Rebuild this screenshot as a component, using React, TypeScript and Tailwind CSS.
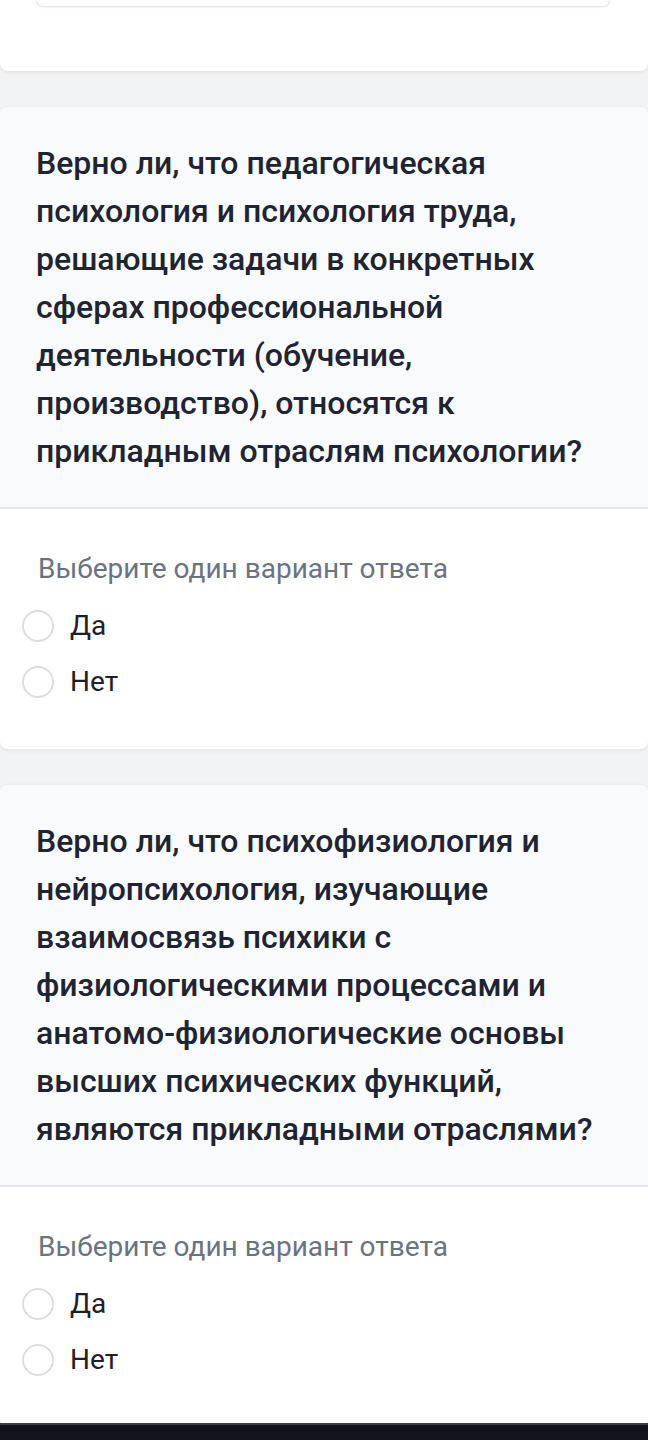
import React from "react";

const font = { fontFamily: "Roboto, 'Noto Sans', sans-serif" };

function Radio({ label }: { label: string }) {
  return (
    <label className="flex h-14 items-center gap-4 cursor-pointer">
      <span className="block h-[32px] w-[32px] shrink-0 rounded-full border-2 border-[#dedede] bg-white" />
      <span className="text-[28px] leading-8 text-[#1f2129]">{label}</span>
    </label>
  );
}

function Question({ text }: { text: string }) {
  return (
    <div className="overflow-hidden rounded-lg bg-white shadow-[0_1px_4px_rgba(0,0,0,0.08)]">
      <div className="border-b-2 border-[#e5e7eb] bg-[#f9fafb] px-9 py-8">
        <p className="text-[32px] font-medium leading-[48px] text-[#1f2433]">{text}</p>
      </div>
      <div className="px-[22px] pb-[39px] pt-[44px]">
        <p className="pl-4 text-[28px] leading-8 text-[#6b7280]">Выберите один вариант ответа</p>
        <div className="mt-[13px] flex flex-col">
          <Radio label="Да" />
          <Radio label="Нет" />
        </div>
      </div>
    </div>
  );
}

export default function App() {
  return (
    <div className="min-h-[1440px] bg-[#f2f3f5]" style={font}>
      <div className="flex flex-col gap-9">
        <div className="h-[71px] rounded-b-lg bg-white shadow-[0_1px_4px_rgba(0,0,0,0.08)]">
          <div className="ml-[36px] mr-[38px] h-[7px] rounded-b-xl border border-t-0 border-[#e5e7eb] shadow-[0_1px_2px_rgba(0,0,0,0.05)]" />
        </div>
        <Question text="Верно ли, что педагогическая психология и психология труда, решающие задачи в конкретных сферах профессиональной деятельности (обучение, производство), относятся к прикладным отраслям психологии?" />
        <Question text="Верно ли, что психофизиология и нейропсихология, изучающие взаимосвязь психики с физиологическими процессами и анатомо-физиологические основы высших психических функций, являются прикладными отраслями?" />
      </div>
      <div className="fixed bottom-0 left-0 right-0 h-[17px] border-t-2 border-[#3d3e42] bg-[#12131b]" />
    </div>
  );
}
